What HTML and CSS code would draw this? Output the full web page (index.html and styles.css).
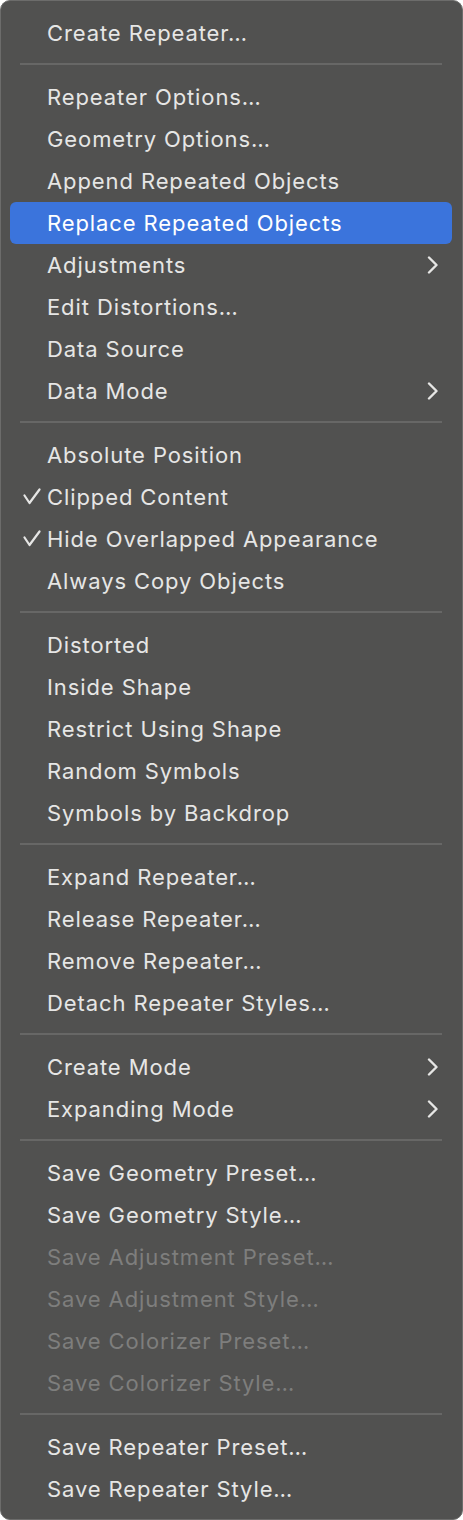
FILE: index.html
```html
<!DOCTYPE html>
<html>
<head>
<meta charset="utf-8">
<link rel="stylesheet" href="styles.css">
</head>
<body>
<div class="menu">
  <div class="item">Create Repeater…</div>
  <div class="sep"></div>
  <div class="item">Repeater Options…</div>
  <div class="item">Geometry Options…</div>
  <div class="item">Append Repeated Objects</div>
  <div class="item active">Replace Repeated Objects</div>
  <div class="item">Adjustments<svg class="chev" width="12" height="18" viewBox="0 0 12 18"><path d="M2 1.5 L9.5 9 L2 16.5" fill="none" stroke="currentColor" stroke-width="2.4" stroke-linecap="round" stroke-linejoin="round"/></svg></div>
  <div class="item">Edit Distortions…</div>
  <div class="item">Data Source</div>
  <div class="item">Data Mode<svg class="chev" width="12" height="18" viewBox="0 0 12 18"><path d="M2 1.5 L9.5 9 L2 16.5" fill="none" stroke="currentColor" stroke-width="2.4" stroke-linecap="round" stroke-linejoin="round"/></svg></div>
  <div class="sep"></div>
  <div class="item">Absolute Position</div>
  <div class="item"><svg class="check" width="18" height="17" viewBox="0 0 18 17"><path d="M1.5 7.5 L6.5 15 L16.5 1.5" fill="none" stroke="currentColor" stroke-width="2.2" stroke-linecap="round" stroke-linejoin="round"/></svg>Clipped Content</div>
  <div class="item"><svg class="check" width="18" height="17" viewBox="0 0 18 17"><path d="M1.5 7.5 L6.5 15 L16.5 1.5" fill="none" stroke="currentColor" stroke-width="2.2" stroke-linecap="round" stroke-linejoin="round"/></svg>Hide Overlapped Appearance</div>
  <div class="item">Always Copy Objects</div>
  <div class="sep"></div>
  <div class="item">Distorted</div>
  <div class="item">Inside Shape</div>
  <div class="item">Restrict Using Shape</div>
  <div class="item">Random Symbols</div>
  <div class="item">Symbols by Backdrop</div>
  <div class="sep"></div>
  <div class="item">Expand Repeater…</div>
  <div class="item">Release Repeater…</div>
  <div class="item">Remove Repeater…</div>
  <div class="item">Detach Repeater Styles…</div>
  <div class="sep"></div>
  <div class="item">Create Mode<svg class="chev" width="12" height="18" viewBox="0 0 12 18"><path d="M2 1.5 L9.5 9 L2 16.5" fill="none" stroke="currentColor" stroke-width="2.4" stroke-linecap="round" stroke-linejoin="round"/></svg></div>
  <div class="item">Expanding Mode<svg class="chev" width="12" height="18" viewBox="0 0 12 18"><path d="M2 1.5 L9.5 9 L2 16.5" fill="none" stroke="currentColor" stroke-width="2.4" stroke-linecap="round" stroke-linejoin="round"/></svg></div>
  <div class="sep"></div>
  <div class="item">Save Geometry Preset…</div>
  <div class="item">Save Geometry Style…</div>
  <div class="item disabled">Save Adjustment Preset…</div>
  <div class="item disabled">Save Adjustment Style…</div>
  <div class="item disabled">Save Colorizer Preset…</div>
  <div class="item disabled">Save Colorizer Style…</div>
  <div class="sep"></div>
  <div class="item">Save Repeater Preset…</div>
  <div class="item">Save Repeater Style…</div>
</div>
</body>
</html>
```
FILE: styles.css
```css
html, body {
  margin: 0;
  padding: 0;
  background: #ffffff;
}
.menu {
  box-sizing: border-box;
  width: 463px;
  height: 1520px;
  background: #515150;
  border: 1px solid #6c6c6b;
  border-radius: 10px;
  padding: 11px 0 9px 0;
  font-family: Inter, "Noto Sans", sans-serif;
  font-size: 22px;
  letter-spacing: 0.9px;
  color: #e6e6e5;
}
.item {
  position: relative;
  height: 42px;
  display: flex;
  align-items: center;
  margin: 0 10px 0 9px;
  padding-left: 37px;
  border-radius: 6px;
  white-space: nowrap;
}
.item.active {
  background: #3b74dc;
  color: #ffffff;
}
.item.disabled {
  color: #7e7e7d;
}
.sep {
  height: 2px;
  margin: 9px 20px 11px 19px;
  background: #676766;
}
.check {
  position: absolute;
  left: 13px;
  top: 12px;
}
.chev {
  position: absolute;
  right: 13px;
  top: 12px;
}
```
